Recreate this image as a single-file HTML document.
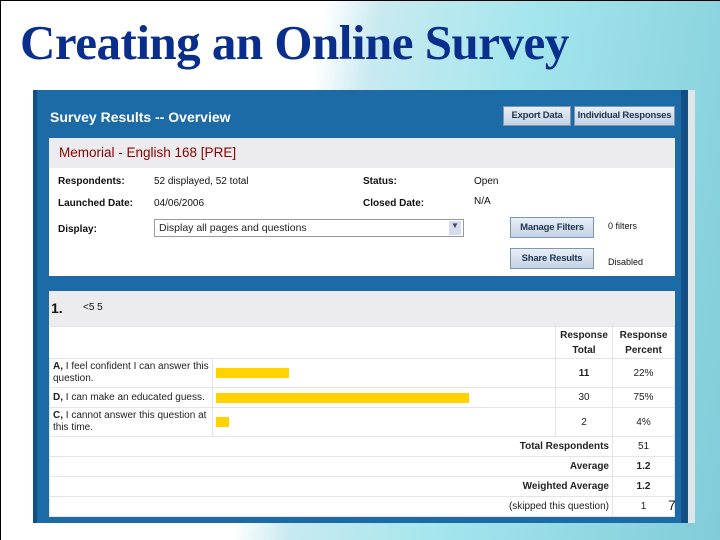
<!DOCTYPE html>
<html><head><style>
*{margin:0;padding:0;box-sizing:border-box}
body{width:720px;height:540px;overflow:hidden;position:relative;font-family:"Liberation Sans",sans-serif;
background:linear-gradient(100deg,#fff 0%,#fff 40%,#c8eaf0 47%,#a5e6ee 65%,#80ccd8 100%);}
.t{position:absolute;left:20px;top:14px;font-family:"Liberation Serif",serif;font-weight:bold;font-size:49px;color:#0a2e8c;letter-spacing:-0.5px;white-space:nowrap}
.bl{position:absolute;left:0;top:0;width:1px;height:540px;background:#000}
.bt{position:absolute;left:0;top:0;width:720px;height:1px;background:#000}
.p{position:absolute;left:33px;top:90px;width:655px;height:433px;background:#1c6aa6;border-left:4px solid #114f86;border-right:7px solid #114f86}
.gs{position:absolute;left:688px;top:90px;width:7px;height:433px;background:#dfe6ea}
.a{position:absolute;font-size:11px;color:#111;white-space:nowrap}
.b{font-weight:bold}
.btn{position:absolute;background:linear-gradient(#e8eef6,#c3d2e4);border:1px solid #7b96b6;font-size:9.5px;font-weight:bold;color:#1f3550;text-align:center;white-space:nowrap;letter-spacing:-0.2px}
.w{position:absolute;background:#fff}
table{border-collapse:collapse;position:absolute;left:49px;top:326px;width:626px;font-size:10px;color:#222}
td{border:1px solid #e4e4e4;padding:0 3px}
</style></head><body>
<div class="bt"></div><div class="bl"></div>
<div class="t">Creating an Online Survey</div>
<div class="p"></div><div class="gs"></div>
<div class="a b" style="left:50px;top:109px;font-size:14px;color:#fff">Survey Results -- Overview</div>
<div class="btn" style="left:503px;top:106px;width:68px;height:20px;line-height:18px">Export Data</div>
<div class="btn" style="left:574px;top:106px;width:101px;height:20px;line-height:18px">Individual Responses</div>
<div class="w" style="left:49px;top:138px;width:626px;height:138px"></div>
<div class="w" style="left:49px;top:138px;width:626px;height:30px;background:#ececef"></div>
<div class="a" style="left:59px;top:145px;font-size:13.5px;color:#8b0000">Memorial - English 168 [PRE]</div>
<div class="a b" style="left:58px;top:176px;font-size:10px">Respondents:</div>
<div class="a" style="left:154px;top:176px;font-size:10px">52 displayed, 52 total</div>
<div class="a b" style="left:363px;top:176px;font-size:10px">Status:</div>
<div class="a" style="left:474px;top:176px;font-size:10px">Open</div>
<div class="a b" style="left:58px;top:198px;font-size:10px">Launched Date:</div>
<div class="a" style="left:154px;top:198px;font-size:10px">04/06/2006</div>
<div class="a b" style="left:363px;top:198px;font-size:10px">Closed Date:</div>
<div class="a" style="left:474px;top:196px;font-size:10px">N/A</div>
<div class="a b" style="left:58px;top:224px;font-size:10px">Display:</div>
<div style="position:absolute;left:154px;top:219px;width:310px;height:18px;border:1px solid #999;font-size:10.5px;padding:2px 4px;color:#222">Display all pages and questions<span style="position:absolute;right:2px;top:1px;width:12px;height:14px;background:#d4dcef;font-size:8px;text-align:center;color:#446">▼</span></div>
<div class="btn" style="left:510px;top:217px;width:84px;height:21px;line-height:20px">Manage Filters</div>
<div class="a" style="left:608px;top:221px;font-size:9px">0 filters</div>
<div class="btn" style="left:510px;top:248px;width:84px;height:21px;line-height:20px">Share Results</div>
<div class="a" style="left:608px;top:257px;font-size:9px">Disabled</div>
<div class="w" style="left:49px;top:291px;width:626px;height:226px"></div>
<div class="w" style="left:49px;top:291px;width:626px;height:35px;background:#ececef"></div>
<div class="a b" style="left:51px;top:300px;font-size:14px">1.</div>
<div class="a" style="left:83px;top:302px;font-size:10px">&lt;5 5</div>
<table>
<tr style="height:32px"><td colspan="2" style="border-left:none"></td><td class="b" style="text-align:center;width:57px;line-height:15px">Response<br>Total</td><td class="b" style="text-align:center;width:62px;line-height:15px">Response<br>Percent</td></tr>
<tr style="height:29px"><td style="width:163px;line-height:12px"><b>A,</b> I feel confident I can answer this question.</td><td><div style="width:73px;height:10px;background:#ffd200"></div></td><td class="b" style="text-align:center">11</td><td style="text-align:center">22%</td></tr>
<tr style="height:20px"><td><b>D,</b> I can make an educated guess.</td><td><div style="width:253px;height:10px;background:#ffd200"></div></td><td style="text-align:center">30</td><td style="text-align:center">75%</td></tr>
<tr style="height:29px"><td style="line-height:12px"><b>C,</b> I cannot answer this question at this time.</td><td><div style="width:13px;height:10px;background:#ffd200"></div></td><td style="text-align:center">2</td><td style="text-align:center">4%</td></tr>
<tr style="height:20px"><td colspan="3" class="b" style="text-align:right">Total Respondents</td><td style="text-align:center">51</td></tr>
<tr style="height:20px"><td colspan="3" class="b" style="text-align:right">Average</td><td class="b" style="text-align:center">1.2</td></tr>
<tr style="height:20px"><td colspan="3" class="b" style="text-align:right">Weighted Average</td><td class="b" style="text-align:center">1.2</td></tr>
<tr style="height:20px"><td colspan="3" style="text-align:right">(skipped this question)</td><td style="text-align:center">1</td></tr>
</table>
<div class="a" style="left:668px;top:497px;font-size:14px;color:#222">7</div>
</body></html>
